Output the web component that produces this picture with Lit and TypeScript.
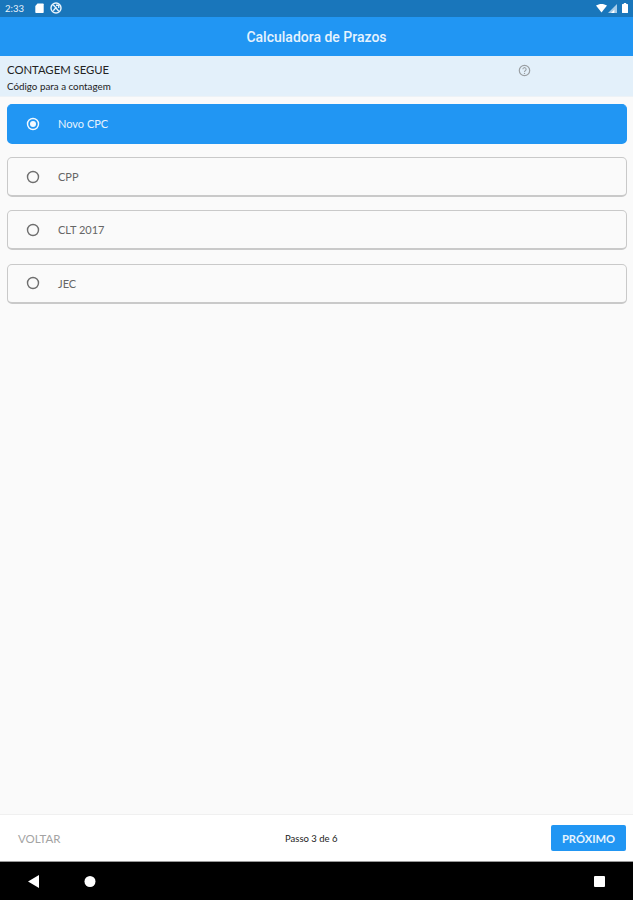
import { LitElement, html, css, svg } from 'lit';
import { customElement, state } from 'lit/decorators.js';

const OPTIONS = ['Novo CPC', 'CPP', 'CLT 2017', 'JEC'];

@customElement('app-root')
export class AppRoot extends LitElement {
  static styles = css`
    :host {
      display: flex;
      flex-direction: column;
      width: 633px;
      height: 900px;
      overflow: hidden;
      background: #fafafa;
      font-family: 'Lato', 'Liberation Sans', sans-serif;
    }

    .status {
      height: 17px;
      flex: none;
      background: #1976bb;
      color: #e8f2fa;
      display: flex;
      align-items: center;
      padding: 0 5px 1px 5px;
      box-sizing: border-box;
      font-size: 9.5px;
    }
    .status .time { margin-right: 4px; width: 20px; }
    .status .left { display: flex; align-items: center; gap: 6px; }
    .status .right { margin-left: auto; display: flex; align-items: center; gap: 1px; }
    .status svg { display: block; }

    .appbar {
      height: 39px;
      flex: none;
      background: #2196f3;
      color: #e6f3fe;
      display: flex;
      align-items: center;
      justify-content: center;
      font-family: 'Roboto', sans-serif;
      font-size: 14px;
      font-weight: 500;
      box-sizing: border-box;
    }

    .head {
      height: 41px;
      flex: none;
      box-sizing: border-box;
      background: #e3f0fa;
      border-bottom: 1px solid #edf2f6;
      padding: 6px 7px 0;
      display: flex;
      justify-content: space-between;
      color: #222;
    }
    .head .title { font-size: 11.3px; line-height: 15px; }
    .head .sub { font-size: 9.8px; line-height: 13px; margin-top: 3px; }
    .help { margin: 2px 95px 0 0; }

    .list {
      flex: 1;
      display: flex;
      flex-direction: column;
      gap: 13.2px;
      padding: 7px 6px 0 7px;
    }
    .option {
      height: 40px;
      flex: none;
      box-sizing: border-box;
      border: 1px solid #c9c9c9;
      border-bottom-width: 2px;
      border-radius: 5px;
      background: #fafafa;
      color: #666;
      display: flex;
      align-items: center;
      padding-left: 18px;
      font-size: 11px;
    }
    .option.selected {
      background: #2196f3;
      border-color: #2196f3;
      color: #e6f3fe;
    }
    .option svg { margin-right: 18px; flex: none; }

    .footer {
      height: 47px;
      flex: none;
      box-sizing: border-box;
      background: #fff;
      border-top: 1px solid #f0f0f0;
      display: grid;
      grid-template-columns: 267px auto 1fr;
      align-items: center;
      padding: 0 7px 0 18px;
    }
    .back { color: #a3a3a3; font-size: 11.5px; }
    .step { color: #222; font-size: 9.5px; }
    .next {
      justify-self: end;
      width: 75px;
      height: 26px;
      border-radius: 2px;
      background: #2196f3;
      color: #e6f3fe;
      font-size: 11.2px;
      font-weight: 700;
      display: flex;
      align-items: center;
      justify-content: center;
    }

    .nav {
      height: 39px;
      flex: none;
      background: #000;
      position: relative;
      border-top: 1px solid #999;
      box-sizing: border-box;
    }
    .nav svg { position: absolute; top: 0; left: 0; }
  `;

  @state() private selected = 0;

  private radio(on: boolean) {
    const color = on ? '#f4faff' : '#6e6e6e';
    return html`<svg width="14" height="14" viewBox="0 0 14 14">
      <circle cx="7" cy="7" r="5.5" fill="none" stroke=${color} stroke-width="1.4"></circle>
      ${on ? svg`<circle cx="7" cy="7" r="3" fill=${color}></circle>` : ''}
    </svg>`;
  }

  render() {
    return html`
      <div class="status">
        <div class="left">
          <span class="time">2:33</span>
          <svg width="9" height="10" viewBox="0 0 9 10"><path d="M2.5 0.5H8a.7.7 0 0 1 .7.7v8a.7.7 0 0 1-.7.7H1a.7.7 0 0 1-.7-.7V3z" fill="#fff"></path></svg>
          <svg width="12" height="12" viewBox="0 0 11 11">
            <circle cx="5.5" cy="5.5" r="4.6" fill="none" stroke="#eaf4fc" stroke-width="1.3"></circle>
            <path d="M3 2.5L8 8.5M3 8L6 4.5M5.5 3H8V5.5" fill="none" stroke="#eaf4fc" stroke-width="1.2"></path>
          </svg>
        </div>
        <div class="right">
          <svg width="11" height="9" viewBox="0 0 11 9"><path d="M0 1.6C3.2-.5 7.8-.5 11 1.6L5.5 8.6z" fill="#fff"></path></svg>
          <svg width="9" height="9" viewBox="0 0 9 9"><path d="M0 9L9 0V9z" fill="#a6cbe8"></path><path d="M3 9L6.4 5.6V9z" fill="#fff"></path></svg>
          <svg width="6" height="10" viewBox="0 0 6 10" style="margin-left:4px"><path d="M1.8 0h2.4v1H5.4a.6.6 0 0 1 .6.6v7.8a.6.6 0 0 1-.6.6H.6A.6.6 0 0 1 0 9.4V1.6A.6.6 0 0 1 .6 1H1.8z" fill="#fff"></path></svg>
        </div>
      </div>

      <div class="appbar">Calculadora de Prazos</div>

      <div class="head">
        <div>
          <div class="title">CONTAGEM SEGUE</div>
          <div class="sub">Código para a contagem</div>
        </div>
        <svg class="help" width="13" height="13" viewBox="0 0 13 13">
          <circle cx="6.5" cy="6.5" r="5.2" fill="none" stroke="#9a9fa3" stroke-width="1.2"></circle>
          <path d="M4.9 5.2a1.6 1.6 0 1 1 2.5 1.4c-.6.4-.9.7-.9 1.3" fill="none" stroke="#9a9fa3" stroke-width="1.1"></path>
          <circle cx="6.5" cy="9.4" r=".7" fill="#9a9fa3"></circle>
        </svg>
      </div>

      <div class="list">
        ${OPTIONS.map((label, i) => html`
          <div class="option ${i === this.selected ? 'selected' : ''}" @click=${() => (this.selected = i)}>
            ${this.radio(i === this.selected)}
            <span>${label}</span>
          </div>
        `)}
      </div>

      <div class="footer">
        <span class="back">VOLTAR</span>
        <span class="step">Passo 3 de 6</span>
        <span class="next">PRÓXIMO</span>
      </div>

      <div class="nav">
        <svg width="633" height="38" viewBox="0 0 633 38">
          <path d="M28 19.5L39 13V26z" fill="#fff"></path>
          <circle cx="90" cy="19.5" r="5.5" fill="#fff"></circle>
          <rect x="594" y="14" width="11" height="11" rx="1" fill="#fff"></rect>
        </svg>
      </div>
    `;
  }
}
